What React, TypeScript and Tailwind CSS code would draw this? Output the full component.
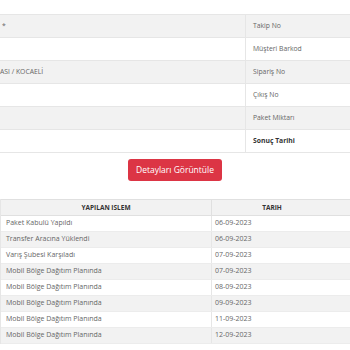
const infoRows = [
    { value: '*', label: 'Takip No' },
    { value: '', label: 'Müşteri Barkod' },
    { value: 'ASI / KOCAELİ', label: 'Sipariş No' },
    { value: '', label: 'Çıkış No' },
    { value: '', label: 'Paket Miktarı' },
    { value: '', label: 'Sonuç Tarihi', bold: true },
];

const moves = [
    { islem: 'Paket Kabulü Yapıldı', tarih: '06-09-2023' },
    { islem: 'Transfer Aracına Yüklendi', tarih: '06-09-2023' },
    { islem: 'Varış Şubesi Karşıladı', tarih: '07-09-2023' },
    { islem: 'Mobil Bölge Dağıtım Planında', tarih: '07-09-2023' },
    { islem: 'Mobil Bölge Dağıtım Planında', tarih: '08-09-2023' },
    { islem: 'Mobil Bölge Dağıtım Planında', tarih: '09-09-2023' },
    { islem: 'Mobil Bölge Dağıtım Planında', tarih: '11-09-2023' },
    { islem: 'Mobil Bölge Dağıtım Planında', tarih: '12-09-2023' },
];

const App = () => {
    return (
        <div className="w-[350px] h-[350px] overflow-hidden bg-white text-[#666] font-['Open_Sans',sans-serif]">
            {/* Kargo bilgileri */}
            <div className="h-[15px] border-b border-[#e6e6e6]" />
            {infoRows.map((row, i) => (
                <div
                    key={row.label}
                    className={`grid grid-cols-[245px_1fr] h-[23px] border-b border-[#e6e6e6] text-[6.8px] ${i % 2 === 0 ? 'bg-[#f2f2f2]' : 'bg-white'}`}
                >
                    <div className={`flex items-center ${row.value === '*' ? 'pl-[2px]' : 'pl-0'}`}>{row.value}</div>
                    <div className={`flex items-center pl-[7px] border-l border-[#e6e6e6] ${row.bold ? 'font-bold text-[#333]' : ''}`}>
                        {row.label}
                    </div>
                </div>
            ))}

            <div className="flex justify-center pt-[6px]">
                <button className="h-[22px] px-[8px] rounded-[3px] bg-[#dc3545] text-white text-[8.5px]">
                    Detayları Görüntüle
                </button>
            </div>

            {/* Hareketler */}
            <div className="mt-[18px] border-l border-[#e6e6e6]">
                <div className="grid grid-cols-[210px_1fr] h-[17px] bg-[#f2f2f2] border-y border-[#e0e0e0] text-[6.5px] font-bold text-[#333]">
                    <div className="flex items-center justify-center">YAPILAN ISLEM</div>
                    <div className="flex items-center justify-center pr-[18px] border-l border-[#e0e0e0]">TARIH</div>
                </div>
                {moves.map((m, i) => (
                    <div
                        key={i}
                        className={`grid grid-cols-[210px_1fr] h-[16px] border-b border-[#ececec] text-[7px] ${i % 2 === 1 ? 'bg-[#f2f2f2]' : 'bg-white'}`}
                    >
                        <div className="flex items-center pl-[5px]">{m.islem}</div>
                        <div className="flex items-center pl-[3px] border-l border-[#e6e6e6]">{m.tarih}</div>
                    </div>
                ))}
            </div>
        </div>
    );
};

export default App;
